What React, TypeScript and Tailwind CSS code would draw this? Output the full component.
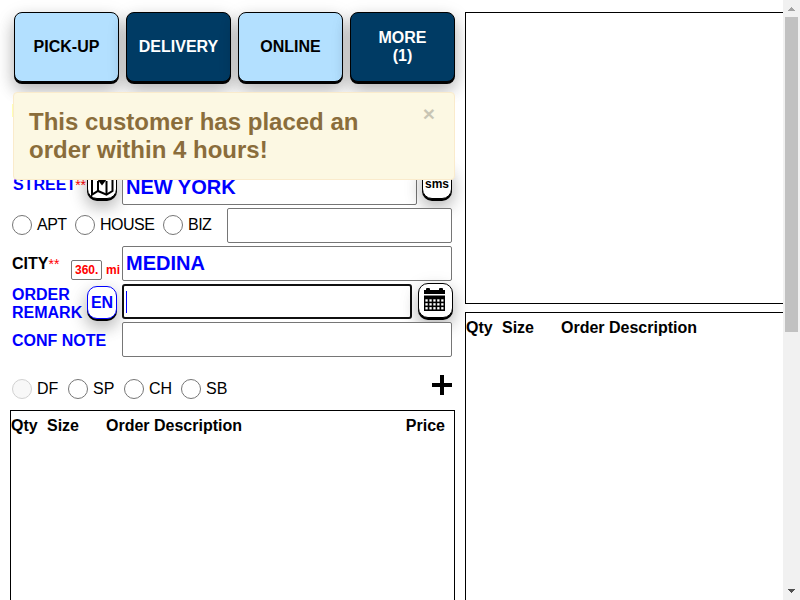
import type { ReactNode } from 'react';

const keyShadow = 'shadow-[0_2px_0_0_#000,0_8px_16px_0_rgba(0,0,0,0.2),0_6px_20px_0_rgba(0,0,0,0.15)]';

function OrderType({ dark = false, children }: { dark?: boolean; children: ReactNode }) {
  return (
    <button
      className={`flex h-[70px] w-[105px] items-center justify-center rounded-[8px] border border-black text-center font-bold leading-[18px] ${keyShadow} ${
        dark ? 'bg-[#003b64] text-white' : 'bg-[#b3e0ff] text-black'
      }`}
    >
      {children}
    </button>
  );
}

function Radio({ label, width, disabled = false }: { label: string; width: string; disabled?: boolean }) {
  return (
    <label className={`flex shrink-0 items-center gap-[5px] whitespace-nowrap ${width}`}>
      <input
        type="radio"
        disabled={disabled}
        className="size-5 shrink-0 appearance-none rounded-full border border-[#767676] bg-white disabled:border-[#d1d1d1] disabled:bg-[#f8f8f8]"
      />
      {label}
    </label>
  );
}

function KeyButton({ className, children }: { className: string; children: ReactNode }) {
  return (
    <button className={`flex shrink-0 justify-center rounded-[10px] border bg-white ${keyShadow} ${className}`}>
      {children}
    </button>
  );
}

const field = 'h-[35px] rounded-[2px] border border-[#767676] bg-white pl-[3px] text-[20px] font-bold text-[#0000ff] outline-none';

function MapIcon() {
  return (
    <svg width="24" height="24" viewBox="0 0 24 24" className="shrink-0" fill="none" stroke="#000" strokeWidth="2">
      <path d="M6 5 2 6.8v15.9l6-3.7 8.5 3.7 6-3.7V4L18 6" />
      <path d="M8 9v10M16.5 9v13" />
      <path d="M12 13.5 6.6 6.4a5.6 5.6 0 1 1 10.8 0Z" fill="#000" stroke="none" />
    </svg>
  );
}

function CalendarIcon() {
  const columns = [1.4, 5.4, 9.3, 13.2, 17.2];
  const rows = [11.3, 15.2, 19.1];
  return (
    <svg width="21" height="23" viewBox="0 0 21 23" className="shrink-0">
      <path d="M0 2h2V1a1 1 0 0 1 1-1h2a1 1 0 0 1 1 1v1h9V1a1 1 0 0 1 1-1h2a1 1 0 0 1 1 1v1h2v4H0ZM0 7.5h21V23H0Z" fill="#000" />
      {rows.map((y) =>
        columns.map((x) => <rect key={`${x}-${y}`} x={x} y={y} width="2.3" height="2.3" fill="#fff" />),
      )}
    </svg>
  );
}

function ScrollBar() {
  return (
    <div className="flex h-full w-[17px] shrink-0 flex-col items-center bg-[#f1f1f1]">
      <svg width="17" height="17" shapeRendering="crispEdges">
        <path d="M5 11h7v-1h-1V9h-1V8H9V7H8v1H7v1H6v1H5Z" fill="#a3a3a3" />
      </svg>
      <div className="h-[315px] w-[13px] bg-[#c1c1c1]" />
      <svg width="17" height="17" className="mt-auto" shapeRendering="crispEdges">
        <path d="M5 6h7v1h-1v1h-1v1H9v1H8V9H7V8H6V7H5Z" fill="#505050" />
      </svg>
    </div>
  );
}

export default function App() {
  return (
    <div className="relative flex h-[600px] w-[800px] overflow-hidden bg-white font-['Liberation_Sans',Arial,sans-serif] text-[16px] leading-[18px] text-black">
      <div className="ml-[10px] flex w-[445px] shrink-0 flex-col pt-3">
        <div className="ml-1 flex h-[70px] shrink-0 gap-[7px]">
          <OrderType>PICK-UP</OrderType>
          <OrderType dark>DELIVERY</OrderType>
          <OrderType>ONLINE</OrderType>
          <OrderType dark>
            MORE
            <br />
            (1)
          </OrderType>
        </div>

        <div className="mt-[22px] mb-[53px] ml-[2px] h-[13px] w-10 shrink-0 bg-[#ffffb3]" />

        <div className="flex shrink-0 flex-col gap-[3px] pl-[2px]">
          <div className="flex h-[35px]">
            <div className="mt-[6px] flex w-[75px] shrink-0 pl-px font-bold text-[#0000ff]">
              STREET
              <span className="-ml-px text-[14px] font-normal text-[#ff0000]">**</span>
            </div>
            <KeyButton className="-mt-[6px] h-[35px] w-[30px] items-end border-black pb-[2px]">
              <MapIcon />
            </KeyButton>
            <input defaultValue="NEW YORK" className={`ml-[5px] w-[295px] ${field}`} />
            <KeyButton className="-mt-[6px] ml-[5px] h-[35px] w-[30px] items-center border-black pt-[5px] text-[12px] font-bold">
              sms
            </KeyButton>
          </div>

          <div className="flex h-[35px]">
            <div className="flex h-[34px] tracking-[-0.5px]">
              <Radio label="APT" width="w-[63px]" />
              <Radio label="HOUSE" width="w-[88px]" />
              <Radio label="BIZ" width="w-[64px]" />
            </div>
            <input className={`w-[225px] ${field}`} />
          </div>

          <div className="flex h-[35px]">
            <div className="mt-[9px] flex w-[59px] shrink-0 font-bold">
              CITY<span className="text-[14px] font-normal text-[#ff0000]">**</span>
            </div>
            <input
              defaultValue="360."
              className="mt-[14px] h-5 w-[31px] shrink-0 rounded-[2px] border border-[#767676] pl-[3px] text-[12px] font-bold text-[#ff0000]"
            />
            <span className="mt-[15px] ml-[4px] w-[16px] shrink-0 text-[12px] font-bold text-[#ff0000]">mi</span>
            <input defaultValue="MEDINA" className={`w-[330px] ${field}`} />
          </div>

          <div className="flex h-[35px]">
            <div className="mt-[2px] w-[75px] shrink-0 font-bold text-[#0000ff]">
              ORDER
              <br />
              REMARK
            </div>
            <KeyButton className="mt-[2px] h-[33px] w-[30px] items-center border-[#0000ff] font-bold text-[#0000ff]">EN</KeyButton>
            <div className="ml-[5px] flex h-[35px] w-[290px] items-center rounded-[3px] border-2 border-[#101010] bg-white pl-[2px]">
              <span className="h-[22px] w-px bg-[#0000ff]" />
            </div>
            <KeyButton className="-mt-px ml-[6px] h-[35px] w-[35px] items-center border-black pr-[2px] pb-[2px]">
              <CalendarIcon />
            </KeyButton>
          </div>

          <div className="flex h-[35px]">
            <div className="mt-[10px] w-[110px] shrink-0 font-bold text-[#0000ff]">CONF NOTE</div>
            <input className={`relative w-[330px] ${field}`} />
          </div>
        </div>

        <div className="mt-[18px] flex h-[35px] shrink-0 items-start pl-[2px]">
          <div className="mt-1 flex">
            <Radio label="DF" width="w-[56px]" disabled />
            <Radio label="SP" width="w-[56px]" />
            <Radio label="CH" width="w-[57px]" />
            <Radio label="SB" width="w-[60px]" />
          </div>
          <svg className="mr-[3px] ml-auto" width="20" height="20" shapeRendering="crispEdges">
            <path d="M8 0h4v8h8v4h-8v8H8v-8H0V8h8Z" />
          </svg>
        </div>

        <div className="flex h-[220px] shrink-0 border border-black bg-white pt-[6px] font-bold">
          <span className="w-9">Qty</span>
          <span className="w-[59px]">Size</span>
          <span>Order Description</span>
          <span className="mr-[9px] ml-auto">Price</span>
        </div>
      </div>

      <div className="ml-[10px] flex min-w-0 flex-1 flex-col gap-2 pt-3">
        <div className="h-[292px] shrink-0 border-y border-l border-black bg-white" />
        <div className="flex h-[300px] shrink-0 border-t border-l border-black bg-white pt-[6px] font-bold">
          <span className="w-9">Qty</span>
          <span className="w-[59px]">Size</span>
          <span>Order Description</span>
        </div>
      </div>

      <ScrollBar />

      <div
        role="alert"
        className="absolute top-[92px] left-[13px] flex h-[88px] w-[442px] justify-between rounded-[4px] border border-[#faebcc] bg-[#fcf8e3] pt-[15px] pr-[19px] pl-[15px] text-[#8a6d3b]"
      >
        <p className="w-[360px] text-[24px] leading-7 font-bold">This customer has placed an order within 4 hours!</p>
        <button className="-mt-[5px] h-[21px] text-[21px] leading-[21px] font-bold text-black opacity-20">×</button>
      </div>
    </div>
  );
}
